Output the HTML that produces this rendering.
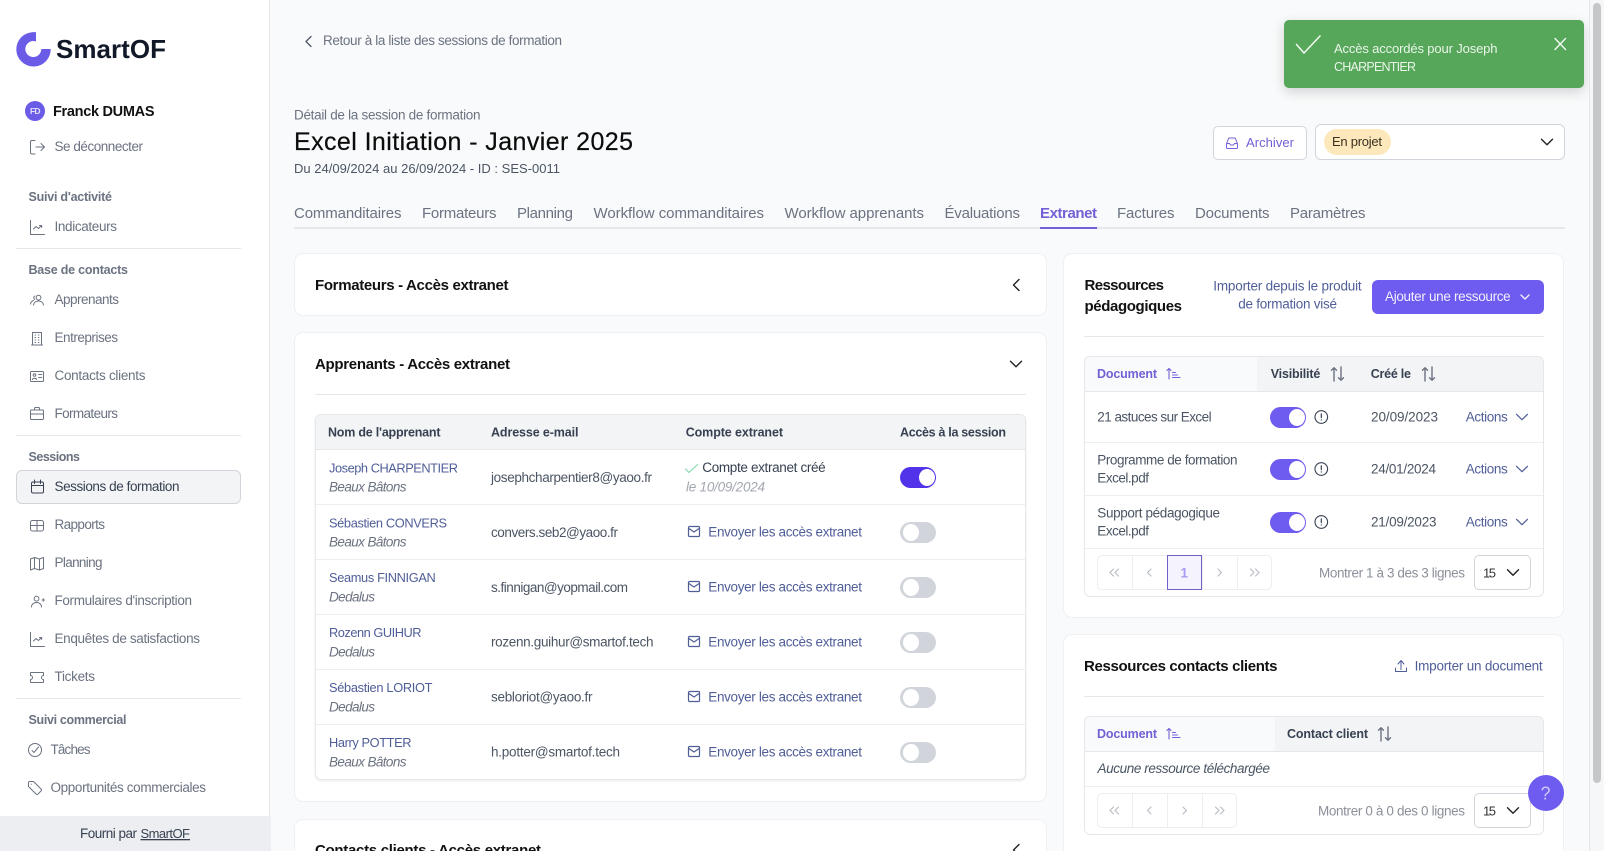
<!DOCTYPE html>
<html lang="fr"><head><meta charset="utf-8"><title>SmartOF</title>
<style>
html,body{margin:0;padding:0;width:1604px;height:851px;overflow:hidden;background:#f9fafb}
#page{position:relative;width:1604px;height:851px;overflow:hidden;background:#f9fafb}
.a{position:absolute;box-sizing:border-box}
.card{background:#fff;border:1px solid #eef0f3;border-radius:9px}
.hl{height:1px;background:#e5e7eb}
.lt{height:1px;background:#eceef1}
.pg{background:#fff;border:1px solid #eceef1}
svg{position:absolute;left:0;top:0}
text{font-family:"Liberation Sans",Arial,sans-serif;font-size:13.5px;fill:#6b7280;white-space:pre}
.nav{fill:#6b7280}
.sec{font-weight:700;font-size:12.5px;fill:#6b7280}
.tab{font-size:15px;fill:#6b7280}
.h{font-weight:700;font-size:15px;fill:#111}
.th{font-weight:700;font-size:12.5px;fill:#374151}
.lnk{fill:#505e98}
.nm{fill:#505e98;font-size:12.8px}
.em{fill:#4b5563}
.co{font-style:italic;fill:#6b7280}
.mut{fill:#8b9099}
.pur{font-weight:700;font-size:12.5px;fill:#7360d6}
.ic{fill:none;stroke:#6b7280;stroke-width:1;stroke-linecap:round;stroke-linejoin:round}
.ik{fill:none;stroke:#b9bdc5;stroke-width:1.2;stroke-linecap:round;stroke-linejoin:round}
.il{fill:none;stroke:#505e98;stroke-width:1.2;stroke-linecap:round;stroke-linejoin:round}
.id{fill:none;stroke:#222;stroke-width:1.4;stroke-linecap:round;stroke-linejoin:round}
</style></head>
<body>
<div id="page">
<!-- Sidebar -->
<div class="a" style="left:0;top:0;width:270px;height:851px;background:#fff;border-right:1px solid #e5e7eb"></div>
<div class="a hl" style="left:16px;top:248px;width:225px"></div>
<div class="a hl" style="left:16px;top:435px;width:225px"></div>
<div class="a hl" style="left:16px;top:698px;width:225px"></div>
<div class="a" style="left:16px;top:470px;width:225px;height:34px;background:#f3f4f6;border:1px solid #d1d5db;border-radius:6px"></div>
<div class="a" style="left:0;top:816px;width:271px;height:35px;background:#eceef1"></div>

<!-- Tabs line -->
<div class="a" style="left:294px;top:227px;width:1271px;height:1.5px;background:#e5e7eb"></div>
<div class="a" style="left:1040px;top:227px;width:57px;height:1.5px;background:#7360d6"></div>

<!-- Header actions -->
<div class="a" style="left:1213px;top:126px;width:94px;height:34px;background:#fff;border:1px solid #d1d5db;border-radius:5px"></div>
<div class="a" style="left:1315px;top:124px;width:250px;height:36px;background:#fff;border:1px solid #d1d5db;border-radius:6px"></div>
<div class="a" style="left:1324px;top:129px;width:67px;height:26px;background:#fce8bb;border-radius:13px"></div>

<!-- Cards left -->
<div class="a card" style="left:294px;top:253px;width:753px;height:63px"></div>
<div class="a card" style="left:294px;top:332px;width:753px;height:470px"></div>
<div class="a card" style="left:294px;top:819px;width:753px;height:60px"></div>
<div class="a hl" style="left:315px;top:394px;width:711px"></div>
<div class="a" style="left:315px;top:414px;width:711px;height:366px;background:#fff;border:1px solid #e5e7eb;border-radius:6px;box-shadow:0 1px 2px rgba(0,0,0,.08);overflow:hidden">
  <div class="a" style="left:0;top:0;width:100%;height:35px;background:#f3f4f6;border-bottom:1px solid #e5e7eb"></div>
  <div class="a lt" style="left:0;top:89px;width:100%"></div>
  <div class="a lt" style="left:0;top:144px;width:100%"></div>
  <div class="a lt" style="left:0;top:199px;width:100%"></div>
  <div class="a lt" style="left:0;top:254px;width:100%"></div>
  <div class="a lt" style="left:0;top:309px;width:100%"></div>
</div>
<!-- toggles left -->
<div class="a" style="left:900px;top:467px;width:36px;height:21px;background:#5233ea;border-radius:11px"></div>
<div class="a" style="left:900px;top:522px;width:36px;height:21px;background:#d1d5db;border-radius:11px"></div>
<div class="a" style="left:900px;top:577px;width:36px;height:21px;background:#d1d5db;border-radius:11px"></div>
<div class="a" style="left:900px;top:632px;width:36px;height:21px;background:#d1d5db;border-radius:11px"></div>
<div class="a" style="left:900px;top:687px;width:36px;height:21px;background:#d1d5db;border-radius:11px"></div>
<div class="a" style="left:900px;top:742px;width:36px;height:21px;background:#d1d5db;border-radius:11px"></div>
<div class="a" style="left:919px;top:469px;width:16px;height:17px;background:#fff;border-radius:50%"></div>
<div class="a" style="left:903px;top:524px;width:16px;height:17px;background:#fff;border-radius:50%"></div>
<div class="a" style="left:903px;top:579px;width:16px;height:17px;background:#fff;border-radius:50%"></div>
<div class="a" style="left:903px;top:634px;width:16px;height:17px;background:#fff;border-radius:50%"></div>
<div class="a" style="left:903px;top:689px;width:16px;height:17px;background:#fff;border-radius:50%"></div>
<div class="a" style="left:903px;top:744px;width:16px;height:17px;background:#fff;border-radius:50%"></div>

<!-- Cards right -->
<div class="a card" style="left:1063px;top:253px;width:501px;height:365px"></div>
<div class="a card" style="left:1063px;top:634px;width:501px;height:240px"></div>
<div class="a" style="left:1372px;top:280px;width:172px;height:34px;background:#6e5bef;border-radius:6px"></div>
<div class="a hl" style="left:1084px;top:336px;width:460px"></div>
<div class="a" style="left:1084px;top:356px;width:460px;height:241px;background:#fff;border:1px solid #e5e7eb;border-radius:6px;overflow:hidden">
  <div class="a" style="left:0;top:0;width:100%;height:35px;background:#f3f4f6;border-bottom:1px solid #e5e7eb"></div>
  <div class="a" style="left:0;top:0;width:172px;height:34px;background:#f9fafb"></div>
  <div class="a lt" style="left:0;top:85px;width:100%"></div>
  <div class="a lt" style="left:0;top:138px;width:100%"></div>
  <div class="a lt" style="left:0;top:191px;width:100%"></div>
</div>
<div class="a" style="left:1270px;top:407px;width:36px;height:21px;background:#6e5bef;border-radius:11px"></div>
<div class="a" style="left:1270px;top:459px;width:36px;height:21px;background:#6e5bef;border-radius:11px"></div>
<div class="a" style="left:1270px;top:512px;width:36px;height:21px;background:#6e5bef;border-radius:11px"></div>
<div class="a" style="left:1289px;top:409px;width:16px;height:17px;background:#fff;border-radius:50%"></div>
<div class="a" style="left:1289px;top:461px;width:16px;height:17px;background:#fff;border-radius:50%"></div>
<div class="a" style="left:1289px;top:514px;width:16px;height:17px;background:#fff;border-radius:50%"></div>

<!-- Pager 1 -->
<div class="a pg" style="left:1097px;top:555px;width:36px;height:35px;border-radius:5px 0 0 5px"></div>
<div class="a pg" style="left:1132px;top:555px;width:36px;height:35px"></div>
<div class="a pg" style="left:1202px;top:555px;width:36px;height:35px"></div>
<div class="a pg" style="left:1237px;top:555px;width:35px;height:35px;border-radius:0 5px 5px 0"></div>
<div class="a" style="left:1167px;top:555px;width:35px;height:35px;background:#f5f3fe;border:1px solid #6f5fc7"></div>
<div class="a" style="left:1474px;top:555px;width:57px;height:35px;background:#fff;border:1px solid #d1d5db;border-radius:5px"></div>

<!-- Card 2 right table -->
<div class="a hl" style="left:1084px;top:696px;width:460px"></div>
<div class="a" style="left:1084px;top:716px;width:460px;height:119px;background:#fff;border:1px solid #e5e7eb;border-radius:6px;overflow:hidden">
  <div class="a" style="left:0;top:0;width:100%;height:35px;background:#f3f4f6;border-bottom:1px solid #e5e7eb"></div>
  <div class="a" style="left:0;top:0;width:190px;height:34px;background:#f9fafb"></div>
  <div class="a lt" style="left:0;top:69px;width:100%"></div>
</div>
<div class="a pg" style="left:1097px;top:793px;width:36px;height:35px;border-radius:5px 0 0 5px"></div>
<div class="a pg" style="left:1132px;top:793px;width:36px;height:35px"></div>
<div class="a pg" style="left:1167px;top:793px;width:36px;height:35px"></div>
<div class="a pg" style="left:1202px;top:793px;width:35px;height:35px;border-radius:0 5px 5px 0"></div>
<div class="a" style="left:1474px;top:793px;width:57px;height:35px;background:#fff;border:1px solid #d1d5db;border-radius:5px"></div>

<!-- Help -->
<div class="a" style="left:1528px;top:775px;width:36px;height:36px;background:#6e5bef;border-radius:50%"></div>

<!-- Toast -->
<div class="a" style="left:1284px;top:20px;width:300px;height:68px;background:#56a75a;border-radius:5px;box-shadow:0 4px 12px rgba(0,0,0,.16)"></div>

<!-- Scrollbar -->
<div class="a" style="left:1589px;top:0;width:15px;height:851px;background:#f6f7f8;border-left:1px solid #e5e7eb"></div>
<div class="a" style="left:1593px;top:3px;width:8px;height:780px;background:#c6c7c9;border-radius:4px"></div>

<svg width="1604" height="851" viewBox="0 0 1604 851" xmlns="http://www.w3.org/2000/svg">
<defs>
<g id="cd"><path d="M-5.5-2.7L0 2.7 5.5-2.7"/></g>
<g id="mail"><rect x=".5" y=".5" width="11" height="10" rx="1"/><path d="M.5 2.2L6 6l5.500-3.800"/></g>
<g id="sn"><path d="M3 14V.8M.5 3.300L3 .8l2.500 2.500M10 0v13.200M7.500 10.700l2.500 2.500 2.500-2.500" fill="none" stroke="#6b7280" stroke-width="1.4" stroke-linecap="round" stroke-linejoin="round"/></g>
<g id="sa"><path d="M2.500 11V.5M.5 2.500l2-2 2 2M6 4.500h3M6 7h5M6 9.500h7.500" fill="none" stroke="#7360d6" stroke-width="1.1" stroke-linecap="round" stroke-linejoin="round"/></g>
<g id="inf"><circle r="6.3" fill="none" stroke="#374151" stroke-width="1.1"/><path d="M0-3.200V.6M0 2.900v.1" fill="none" stroke="#374151" stroke-width="1.2" stroke-linecap="round"/></g>
<g id="pf"><path class="ik" d="M-1-3.500L-4.500 0-1 3.500M4-3.500L.5 0 4 3.500"/></g>
<g id="pp"><path class="ik" d="M1.500-3.500L-2 0l3.500 3.500"/></g>
<g id="pn"><path class="ik" d="M-1.500-3.500L2 0l-3.500 3.500"/></g>
<g id="pl"><path class="ik" d="M-4-3.500L-.5 0-4 3.500M1-3.500L4.500 0 1 3.500"/></g>
</defs>

<!-- Logo -->
<path fill="#6b5ce7" fill-rule="evenodd" d="M36 32.300V41.500A8 8 0 1 0 41.300 49H50.700A17.200 17.200 0 1 1 32 32.200C33.500 32.100 35 32.200 36 32.300Z"/>
<text x="56" y="58" textLength="110" style="font-size:26px;font-weight:700;fill:#111827">SmartOF</text>

<!-- Sidebar user -->
<circle cx="35" cy="111" r="10" fill="#6b5ce7"/>
<text x="30" y="114" textLength="10.5" style="font-size:8.5px;font-weight:700;fill:#e4e0fc">FD</text>
<text x="53" y="116" textLength="101.500" style="font-size:14.5px;font-weight:700;fill:#111">Franck DUMAS</text>

<!-- Sidebar nav text -->
<text class="nav" x="54.500" y="151" textLength="88.500">Se déconnecter</text>
<text class="sec" x="28.500" y="201" textLength="83.500">Suivi d'activité</text>
<text class="nav" x="54.500" y="231" textLength="62.500">Indicateurs</text>
<text class="sec" x="28.500" y="274" textLength="99.500">Base de contacts</text>
<text class="nav" x="54.500" y="304" textLength="64.500">Apprenants</text>
<text class="nav" x="54.500" y="342" textLength="63.500">Entreprises</text>
<text class="nav" x="54.500" y="380" textLength="91">Contacts clients</text>
<text class="nav" x="54.500" y="418" textLength="63.500">Formateurs</text>
<text class="sec" x="28.500" y="461" textLength="51.500">Sessions</text>
<text x="54.500" y="491" textLength="125" style="fill:#374151">Sessions de formation</text>
<text class="nav" x="54.500" y="529" textLength="50.500">Rapports</text>
<text class="nav" x="54.500" y="567" textLength="48">Planning</text>
<text class="nav" x="54.500" y="605" textLength="137.500">Formulaires d'inscription</text>
<text class="nav" x="54.500" y="643" textLength="145.500">Enquêtes de satisfactions</text>
<text class="nav" x="54.500" y="681" textLength="40.500">Tickets</text>
<text class="sec" x="28.500" y="724" textLength="98">Suivi commercial</text>
<text class="nav" x="50.500" y="754" textLength="40">Tâches</text>
<text class="nav" x="50.500" y="792" textLength="155.500">Opportunités commerciales</text>
<text x="80" y="838" textLength="57" style="fill:#374151">Fourni par</text>
<text x="140.500" y="838" textLength="49.500" style="fill:#374151;text-decoration:underline;font-size:13px">SmartOF</text>

<!-- Sidebar icons -->
<g class="ic">
<path d="M35 140.500h-3a1.500 1.500 0 0 0-1.500 1.500v10.500a1.500 1.500 0 0 0 1.500 1.500h3M36 147h8M41 143.500l3.500 3.500-3.500 3.500"/>
<g transform="translate(30,220)"><path d="M.5.5v14h14M3.500 9L6 6.500l2.500 2 3-3M9.500 5.500h2.200v2"/></g>
<g transform="translate(30,295)"><circle cx="8.500" cy="2.600" r="2.400"/><path d="M3.500 10c.5-3 3-4 5-4s4.500 1 5 4M.5 9c.3-2 1.500-3 3-3.500M4.700 4.400a2 2 0 0 1 0-3.400"/></g>
<g transform="translate(32,332)"><path d="M.5 13V.5h9V13M-.5 13h11M3 3h.6M6.300 3h.6M3 5.500h.6M6.300 5.500h.6M3 8h.6M6.300 8h.6M3 10.500h.6M6.300 10.500h.6"/></g>
<g transform="translate(30,371)"><rect x=".5" y=".5" width="13" height="10" rx="1"/><circle cx="4.500" cy="4" r="1.300"/><path d="M2.500 8.500c.3-1.600 3.700-1.600 4 0M8.700 3.500h3M8.700 6.500h3"/></g>
<g transform="translate(30,407)"><rect x=".5" y="3" width="13" height="9.500" rx="1"/><path d="M4.500 3V1.500a1 1 0 0 1 1-1h3a1 1 0 0 1 1 1V3M.5 7h13"/></g>
<g transform="translate(31,480)" style="stroke:#374151"><rect x=".5" y="2" width="12" height="11" rx="1.500"/><path d="M.5 5.500h12M3.500 0v3.500M9.500 0v3.500"/></g>
<g transform="translate(30,520)"><rect x=".5" y=".5" width="13" height="10.500" rx="2"/><path d="M7 .5V11M.5 5.500h13"/></g>
<g transform="translate(30,557)"><path d="M.5 2l4-1.500 5 1.500 4-1.500v11l-4 1.500-5-1.500-4 1.500zM4.500.5v11M9.500 2v11"/></g>
<g transform="translate(31,596)"><circle cx="5.500" cy="2.700" r="2.400"/><path d="M.5 11c0-3 2.500-4.500 5-4.500s5 1.500 5 4.500M11 4h2.500M12.300 2.700v2.600"/></g>
<g transform="translate(30,632)"><path d="M.5.5v14h14M3.500 9L6 6.500l2.500 2 3-3M9.500 5.500h2.200v2"/></g>
<g transform="translate(30,672)"><path d="M1 .5h12a.5.5 0 0 1 .5.5v2.500a2 2 0 0 0 0 4V10a.5.5 0 0 1-.5.5H1a.5.5 0 0 1-.5-.5V7.500a2 2 0 0 0 0-4V1A.5.5 0 0 1 1 .5z"/></g>
<g transform="translate(28,743)"><circle cx="7" cy="7" r="6.500"/><path d="M4 7.500l2 2 4.500-5.500"/></g>
<g transform="translate(28,781)"><path d="M.5 1.500v4L8 13a1.500 1.500 0 0 0 2 0l3-3a1.500 1.500 0 0 0 0-2L5.500.5h-4a1 1 0 0 0-1 1z"/><path d="M3.200 3.200h.1"/></g>
</g>

<!-- Header -->
<path d="M311 36.500L306 41.500l5 5" fill="none" stroke="#4b5563" stroke-width="1.3" stroke-linecap="round" stroke-linejoin="round"/>
<text x="323" y="45" textLength="239" style="fill:#6b7280">Retour à la liste des sessions de formation</text>
<text x="294" y="119.500" textLength="186.500" style="fill:#6b7280">Détail de la session de formation</text>
<text x="294" y="150" textLength="339" style="font-size:25px;fill:#0b0b0b;stroke:#0b0b0b;stroke-width:.2">Excel Initiation - Janvier 2025</text>
<text x="294" y="173" textLength="266" style="fill:#4b5563;font-size:13px">Du 24/09/2024 au 26/09/2024 - ID : SES-0011</text>

<!-- Tabs -->
<text class="tab" x="294" y="218" textLength="107.500">Commanditaires</text>
<text class="tab" x="422" y="218" textLength="74.500">Formateurs</text>
<text class="tab" x="517" y="218" textLength="56">Planning</text>
<text class="tab" x="593.500" y="218" textLength="170.500">Workflow commanditaires</text>
<text class="tab" x="784.500" y="218" textLength="139.500">Workflow apprenants</text>
<text class="tab" x="944.500" y="218" textLength="75.500">Évaluations</text>
<text x="1040" y="218" textLength="57" style="font-size:15px;font-weight:700;fill:#7360d6">Extranet</text>
<text class="tab" x="1117" y="218" textLength="57.500">Factures</text>
<text class="tab" x="1195" y="218" textLength="74.500">Documents</text>
<text class="tab" x="1290" y="218" textLength="75.500">Paramètres</text>

<!-- Toast -->
<path d="M1296.500 44.500l7.500 8.500 16-17" fill="none" stroke="#f2f8f2" stroke-width="1.600" stroke-linecap="round" stroke-linejoin="round"/>
<text x="1334" y="53" textLength="163.500" style="fill:#eaf5ea;font-size:13px">Accès accordés pour Joseph</text>
<text x="1334" y="71" textLength="82" style="fill:#eaf5ea;font-size:12.5px">CHARPENTIER</text>
<path d="M1555 38.500l10.500 11M1565.500 38.500l-10.500 11" fill="none" stroke="#f2f8f2" stroke-width="1.400" stroke-linecap="round"/>

<!-- Archiver / select -->
<g transform="translate(1226,137)" fill="none" stroke="#7360d6" stroke-width="1" stroke-linejoin="round"><path d="M.5 7l2-5.500a1 1 0 0 1 1-.5h5a1 1 0 0 1 1 .5l2 5.500v3.500a1 1 0 0 1-1 1h-9a1 1 0 0 1-1-1zM.5 6.500h3l1 1.500h3l1-1.500h3"/></g>
<text x="1246" y="147" textLength="48" style="fill:#7360d6;font-size:13px">Archiver</text>
<text x="1332" y="146" textLength="50" style="fill:#3b3120;font-size:13px">En projet</text>
<use href="#cd" class="id" x="1547" y="142"/>

<!-- Left cards text -->
<text class="h" x="315" y="290" textLength="193.500">Formateurs - Accès extranet</text>
<path class="id" d="M1019 279.500L1013.500 285l5.500 5.500"/>
<text class="h" x="315" y="369" textLength="195">Apprenants - Accès extranet</text>
<use href="#cd" class="id" x="1016" y="364"/>
<text class="h" x="315" y="855" textLength="226">Contacts clients - Accès extranet</text>
<path class="id" d="M1019 844.500L1013.500 850l5.500 5.500"/>

<text class="th" x="328" y="436.500" textLength="112.500">Nom de l'apprenant</text>
<text class="th" x="491" y="436.500" textLength="87.500">Adresse e-mail</text>
<text class="th" x="685.700" y="436.500" textLength="97.300">Compte extranet</text>
<text class="th" x="900" y="436.500" textLength="106">Accès à la session</text>

<!-- Rows -->
<text class="nm" x="329" y="472.300" textLength="129">Joseph CHARPENTIER</text>
<text class="co" x="329" y="491.500" textLength="77.500">Beaux Bâtons</text>
<text class="em" x="491" y="482" textLength="161">josephcharpentier8@yaoo.fr</text>
<path d="M685.500 469l3.500 3.500 8.500-8" fill="none" stroke="#7fd8ab" stroke-width="1.100" stroke-linecap="round" stroke-linejoin="round"/>
<text x="702.300" y="472" textLength="123.400" style="fill:#374151">Compte extranet créé</text>
<text x="686" y="491.500" textLength="79" style="font-style:italic;fill:#a2a7b0">le 10/09/2024</text>

<text class="nm" x="329" y="527.300" textLength="118">Sébastien CONVERS</text>
<text class="co" x="329" y="546.500" textLength="77.500">Beaux Bâtons</text>
<text class="em" x="491" y="537" textLength="127">convers.seb2@yaoo.fr</text>

<text class="nm" x="329" y="582.200" textLength="106.800">Seamus FINNIGAN</text>
<text class="co" x="329" y="601.500" textLength="46">Dedalus</text>
<text class="em" x="491" y="592" textLength="137">s.finnigan@yopmail.com</text>

<text class="nm" x="329" y="637.200" textLength="92.500">Rozenn GUIHUR</text>
<text class="co" x="329" y="656.500" textLength="46">Dedalus</text>
<text class="em" x="491" y="646.500" textLength="162.500">rozenn.guihur@smartof.tech</text>

<text class="nm" x="329" y="692.100" textLength="103.500">Sébastien LORIOT</text>
<text class="co" x="329" y="711.500" textLength="46">Dedalus</text>
<text class="em" x="491" y="701.500" textLength="101.500">sebloriot@yaoo.fr</text>

<text class="nm" x="329" y="747.100" textLength="82.500">Harry POTTER</text>
<text class="co" x="329" y="766.500" textLength="77.500">Beaux Bâtons</text>
<text class="em" x="491" y="756.500" textLength="129">h.potter@smartof.tech</text>

<use href="#mail" class="il" x="688" y="526"/><text class="lnk" x="708.300" y="536.500" textLength="153.700">Envoyer les accès extranet</text>
<use href="#mail" class="il" x="688" y="581"/><text class="lnk" x="708.300" y="591.500" textLength="153.700">Envoyer les accès extranet</text>
<use href="#mail" class="il" x="688" y="636"/><text class="lnk" x="708.300" y="646.500" textLength="153.700">Envoyer les accès extranet</text>
<use href="#mail" class="il" x="688" y="691"/><text class="lnk" x="708.300" y="701.500" textLength="153.700">Envoyer les accès extranet</text>
<use href="#mail" class="il" x="688" y="746"/><text class="lnk" x="708.300" y="756.500" textLength="153.700">Envoyer les accès extranet</text>

<!-- Right card 1 -->
<text class="h" x="1084.500" y="290" textLength="79.500">Ressources</text>
<text class="h" x="1084.500" y="311" textLength="97.500">pédagogiques</text>
<text class="lnk" x="1213.300" y="290.500" textLength="148.400">Importer depuis le produit</text>
<text class="lnk" x="1238.300" y="308.500" textLength="98.700">de formation visé</text>
<text x="1385" y="301" textLength="125.700" style="fill:#f1effe">Ajouter une ressource</text>
<path d="M1521 295l4 4 4-4" fill="none" stroke="#f1effe" stroke-width="1.400" stroke-linecap="round" stroke-linejoin="round"/>

<text class="pur" x="1097" y="378" textLength="60">Document</text>
<use href="#sa" x="1166.500" y="368"/>
<text class="th" x="1270.700" y="378" textLength="49.600">Visibilité</text>
<use href="#sn" x="1331" y="367"/>
<text class="th" x="1370.700" y="378" textLength="40.300">Créé le</text>
<use href="#sn" x="1422" y="367"/>

<text class="em" x="1097.300" y="421.500" textLength="114.300">21 astuces sur Excel</text>
<text class="em" x="1097.300" y="464.500" textLength="140.200">Programme de formation</text>
<text class="em" x="1097.300" y="482.500" textLength="51.700">Excel.pdf</text>
<text class="em" x="1097.300" y="517.500" textLength="122.700">Support pédagogique</text>
<text class="em" x="1097.300" y="535.500" textLength="51.700">Excel.pdf</text>

<use href="#inf" x="1321.300" y="417"/>
<use href="#inf" x="1321.300" y="469"/>
<use href="#inf" x="1321.300" y="522"/>
<text class="em" x="1371" y="421.500" textLength="67">20/09/2023</text>
<text class="em" x="1371" y="473.500" textLength="65">24/01/2024</text>
<text class="em" x="1371" y="526.500" textLength="65.500">21/09/2023</text>
<text class="lnk" x="1465.700" y="421.500" textLength="42">Actions</text>
<text class="lnk" x="1465.700" y="473.500" textLength="42">Actions</text>
<text class="lnk" x="1465.700" y="526.500" textLength="42">Actions</text>
<use href="#cd" class="il" x="1522" y="417"/>
<use href="#cd" class="il" x="1522" y="469"/>
<use href="#cd" class="il" x="1522" y="522"/>

<use href="#pf" x="1114.500" y="572.500"/>
<use href="#pp" x="1149.500" y="572.500"/>
<text x="1180.500" y="577.500" textLength="8" style="fill:#a89cf0;font-weight:700">1</text>
<use href="#pn" x="1219.500" y="572.500"/>
<use href="#pl" x="1254.500" y="572.500"/>
<text class="mut" x="1319" y="577.500" textLength="146">Montrer 1 à 3 des 3 lignes</text>
<text x="1483" y="577.500" textLength="13" style="fill:#333;font-size:13px">15</text>
<use href="#cd" class="id" x="1513" y="572.500"/>

<!-- Right card 2 -->
<text class="h" x="1084" y="671" textLength="193.500">Ressources contacts clients</text>
<path class="il" d="M1401 661v8.500M1398 664l3-3.500 3 3.500M1395.500 668v3.500h11V668" style="stroke-width:1"/>
<text class="lnk" x="1414.600" y="670.500" textLength="128.100">Importer un document</text>
<text class="pur" x="1097" y="738" textLength="60">Document</text>
<use href="#sa" x="1166.500" y="728"/>
<text class="th" x="1287" y="738" textLength="81">Contact client</text>
<use href="#sn" x="1378" y="727"/>
<text x="1097.500" y="773" textLength="172.500" style="font-style:italic;fill:#4b5563">Aucune ressource téléchargée</text>
<use href="#pf" x="1114.500" y="810.500"/>
<use href="#pp" x="1149.500" y="810.500"/>
<use href="#pn" x="1184.500" y="810.500"/>
<use href="#pl" x="1219.500" y="810.500"/>
<text class="mut" x="1318" y="815.500" textLength="147">Montrer 0 à 0 des 0 lignes</text>
<text x="1483" y="815.500" textLength="13" style="fill:#333;font-size:13px">15</text>
<use href="#cd" class="id" x="1513" y="810.500"/>

<text x="1540.500" y="799.500" textLength="10" style="font-size:18px;fill:#cfc9fb">?</text>
</svg>
</div>
</body></html>
